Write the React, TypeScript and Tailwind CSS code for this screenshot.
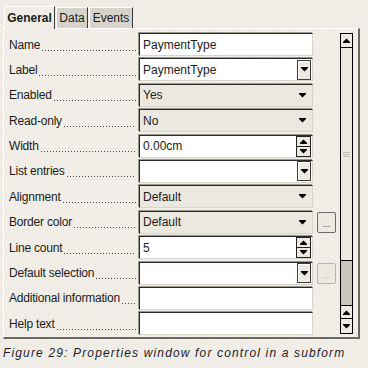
import React from "react";

type Kind = "text" | "combo" | "select" | "spin";

type Row = {
  label: string;
  kind: Kind;
  value?: string;
  more?: "on" | "off";
};

const rows: Row[] = [
  { label: "Name", kind: "text", value: "PaymentType" },
  { label: "Label", kind: "combo", value: "PaymentType" },
  { label: "Enabled", kind: "select", value: "Yes" },
  { label: "Read-only", kind: "select", value: "No" },
  { label: "Width", kind: "spin", value: "0.00cm" },
  { label: "List entries", kind: "combo" },
  { label: "Alignment", kind: "select", value: "Default" },
  { label: "Border color", kind: "select", value: "Default", more: "on" },
  { label: "Line count", kind: "spin", value: "5" },
  { label: "Default selection", kind: "combo", more: "off" },
  { label: "Additional information", kind: "text" },
  { label: "Help text", kind: "text" },
];

const DownArrow = ({ w = 7 }: { w?: number }) => (
  <svg width={w} height="5" viewBox="0 0 7 5">
    <path d="M0 0h7v1L3.5 4.5 0 1z" fill="#000" />
  </svg>
);

const UpArrow = ({ w = 7 }: { w?: number }) => (
  <svg width={w} height="5" viewBox="0 0 7 5">
    <path d="M0 5h7V4L3.5 0.5 0 4z" fill="#000" />
  </svg>
);

const Field = ({ row }: { row: Row }) => {
  const sunken =
    "border border-t-[#2a2a2a] border-l-[#2a2a2a] border-b-[#d8d5cc] border-r-[#d8d5cc] shadow-[-1px_-1px_0_#9a978f]";
  if (row.kind === "select") {
    return (
      <div
        className={`${sunken} flex h-full w-[174px] items-center justify-between bg-[#ebe8df] pl-[3px] pr-[6px]`}
      >
        <span>{row.value}</span>
        <DownArrow />
      </div>
    );
  }
  return (
    <div
      className={`${sunken} flex h-full w-[174px] items-center justify-between bg-white pl-[3px] pr-[1px]`}
    >
      <span>{row.value}</span>
      {row.kind === "combo" && (
        <div className="flex h-[20px] w-[14px] items-center justify-center border border-[#3c3c3c] bg-[#ece9e0] shadow-[inset_1px_1px_0_#fff]">
          <DownArrow />
        </div>
      )}
      {row.kind === "spin" && (
        <div className="flex h-[21px] w-[15px] flex-col">
          <div className="flex flex-1 items-center justify-center border border-[#222] bg-[#ece9e0]">
            <UpArrow w={9} />
          </div>
          <div className="flex flex-1 items-center justify-center border border-t-0 border-[#222] bg-[#ece9e0]">
            <DownArrow w={9} />
          </div>
        </div>
      )}
    </div>
  );
};

const App = () => {
  return (
    <div className="h-[368px] w-[368px] overflow-hidden bg-[#efede6] font-['Liberation_Sans',Arial,sans-serif] text-[12px] text-[#1c1c1c]">
      <div className="flex h-[28px] items-end pl-[4px] pt-[6px]">
        <div className="relative z-10 -mb-px flex h-[23px] w-[51px] items-center justify-center rounded-tl-[2px] border-l border-t border-r border-l-white border-t-white border-r-[#3a3a3a] bg-[#efede6] font-bold">
          General
        </div>
        <div className="ml-px flex h-[21px] w-[32px] items-center justify-center rounded-tl-[2px] border-l border-t border-r border-l-white border-t-white border-r-[#3a3a3a] bg-[#d6d3ca]">
          Data
        </div>
        <div className="ml-px flex h-[21px] w-[44px] items-center justify-center rounded-tl-[2px] border-l border-t border-r border-l-white border-t-white border-r-[#3a3a3a] bg-[#d6d3ca]">
          Events
        </div>
      </div>

      <div className="ml-[3px] flex h-[311px] w-[357px] border border-b-2 border-r-2 border-l-white border-t-white border-r-[#6a6760] border-b-[#6a6760] bg-[#efede6] bg-[radial-gradient(circle,#fbfaf6_0.6px,transparent_0.9px)] bg-[length:5px_5px] pl-[5px] pt-[4px]">
        <div className="flex flex-col gap-[2.4px]">
          {rows.map((row) => (
            <div key={row.label} className="flex h-[23px] items-center">
              <div className="flex w-[130px] items-end pr-[3px] tracking-[-0.2px]">
                <span className="whitespace-nowrap">{row.label}</span>
                <div className="mb-[3px] ml-[2px] h-px flex-1 bg-[linear-gradient(to_right,#4a4a4a_1px,transparent_1px)] bg-[length:3px_1px]" />
              </div>
              <Field row={row} />
              <div className="ml-[4px] w-[19px]">
                {row.more && (
                  <div
                    className={`flex h-[21px] w-[19px] items-end justify-center rounded-[2px] border bg-[#ece9e0] pb-[3px] text-[9px] leading-none ${
                      row.more === "on"
                        ? "border-[#6a6a6a] text-[#333]"
                        : "border-[#b8b5ad] text-[#b8b5ad]"
                    }`}
                  >
                    ...
                  </div>
                )}
              </div>
            </div>
          ))}
        </div>

        <div className="ml-[4px] flex h-[301px] w-[13px] flex-col border border-black">
          <div className="flex h-[14px] items-center justify-center border-b border-black bg-[#ece9e0]">
            <UpArrow />
          </div>
          <div className="flex h-[213px] flex-col items-center justify-center gap-[1px] border-b border-black bg-[#ece9e0]">
            <div className="h-px w-[7px] bg-[#bdbab2]" />
            <div className="h-px w-[7px] bg-[#bdbab2]" />
            <div className="h-px w-[7px] bg-[#bdbab2]" />
          </div>
          <div className="flex-1 bg-[#c9c6bc]" />
          <div className="flex h-[14px] items-center justify-center border-y border-black bg-[#ece9e0]">
            <UpArrow />
          </div>
          <div className="flex h-[14px] items-center justify-center bg-[#ece9e0]">
            <DownArrow />
          </div>
        </div>
      </div>

      <div className="mt-[7px] pl-[3px] text-[12px] italic leading-[14px] tracking-[1.15px] text-[#1e1e2a]">
        Figure 29: Properties window for control in a subform
      </div>
    </div>
  );
};

export default App;
